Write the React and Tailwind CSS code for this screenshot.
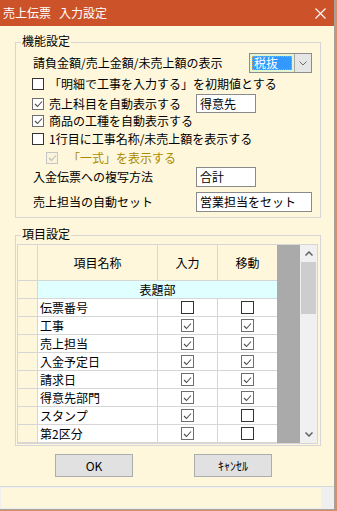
import React from "react";

function Box({ checked, disabled, big }) {
  const size = big ? "w-[13px] h-[13px]" : "w-[12px] h-[12px]";
  const tone = disabled
    ? "border-[#c6c6c6] bg-[#fbf4dc]"
    : checked
    ? "border-[#6e6e6e] bg-white"
    : "border-[#333333] bg-white";
  return (
    <span className={`flex shrink-0 items-center justify-center border ${size} ${tone}`}>
      {checked && (
        <svg width="9" height="8" viewBox="0 0 9 8">
          <polyline
            points="1,4 3.5,6.5 8,1.5"
            fill="none"
            stroke={disabled ? "#b9b9b9" : "#4f4f4f"}
            strokeWidth="1.1"
          />
        </svg>
      )}
    </span>
  );
}

function Group({ label, className, children }) {
  return (
    <div className={`relative ml-[15px] w-[306px] border border-[#d6d6d6] ${className}`}>
      <span className="absolute left-[5px] top-[-9px] bg-[#fff7dc] px-[1px] leading-[14px]">
        {label}
      </span>
      {children}
    </div>
  );
}

const rows = [
  ["伝票番号", false, false],
  ["工事", true, true],
  ["売上担当", true, true],
  ["入金予定日", true, true],
  ["請求日", true, true],
  ["得意先部門", true, true],
  ["スタンプ", true, false],
  ["第2区分", true, false],
];

export default function App() {
  return (
    <div className="h-[511px] w-[337px] overflow-hidden border-b border-r-2 border-[#d98e6b] bg-[#fff7dc] font-['Noto_Sans_CJK_JP',sans-serif] text-[12px] leading-[14px] text-black">
      <div className="flex h-[510px] flex-col border-b border-r border-[#aaa39c]">
        {/* title bar */}
        <div className="flex h-[26px] shrink-0 items-center bg-[#cc5229] pl-[3px] text-white">
          <span>売上伝票</span>
          <span className="ml-[8px]">入力設定</span>
          <svg className="ml-auto mr-[8px]" width="11" height="11" viewBox="0 0 11 11">
            <path d="M0.5 0.5 L10.5 10.5 M10.5 0.5 L0.5 10.5" stroke="white" strokeWidth="1.1" />
          </svg>
        </div>

        {/* 機能設定 */}
        <Group label="機能設定" className="mt-[16px] h-[176px] pt-[10px]">
          <div className="flex h-[20px] items-center pl-[17px]">
            <span>請負金額/売上金額/未売上額の表示</span>
            <div className="ml-auto mr-[8px] flex h-[20px] w-[63px] border border-[#8c8c8c] bg-[#e2f4d0]">
              <div className="m-[2px] flex flex-1 items-center border border-dotted border-[#e0a050] bg-[#3399ff] pl-[1px] text-white">
                税抜
              </div>
              <div className="flex w-[17px] items-center justify-center border-l border-[#a8a8a8] bg-[#e6e6e6]">
                <svg width="8" height="5" viewBox="0 0 8 5">
                  <polyline points="0.5,0.5 4,4 7.5,0.5" fill="none" stroke="#707070" strokeWidth="1" />
                </svg>
              </div>
            </div>
          </div>

          <div className="flex h-[22px] items-center gap-[5px] pl-[16px]">
            <Box />
            <span>「明細で工事を入力する」を初期値とする</span>
          </div>

          <div className="flex h-[17px] items-center pl-[16px]">
            <div className="flex w-[164px] items-center gap-[5px]">
              <Box checked />
              <span>売上科目を自動表示する</span>
            </div>
            <div className="flex h-[19px] w-[60px] shrink-0 items-center border border-[#8a8a8a] bg-white pl-[3px]">
              得意先
            </div>
          </div>

          <div className="flex h-[17px] items-center gap-[5px] pl-[16px]">
            <Box checked />
            <span>商品の工種を自動表示する</span>
          </div>

          <div className="flex h-[19px] items-center gap-[5px] pl-[16px]">
            <Box />
            <span>1行目に工事名称/未売上額を表示する</span>
          </div>

          <div className="flex h-[19px] items-center gap-[10px] pl-[30px]">
            <Box checked disabled />
            <span className="text-[#a88c00]">「一式」を表示する</span>
          </div>

          <div className="flex h-[20px] items-center pl-[17px]">
            <span className="w-[163px]">入金伝票への複写方法</span>
            <div className="flex h-[20px] w-[60px] shrink-0 items-center border border-[#8a8a8a] bg-white pl-[3px]">
              合計
            </div>
          </div>

          <div className="mt-[5px] flex h-[20px] items-center pl-[17px]">
            <span className="w-[163px]">売上担当の自動セット</span>
            <div className="flex h-[20px] w-[116px] shrink-0 items-center border border-[#8a8a8a] bg-white pl-[3px]">
              営業担当をセット
            </div>
          </div>
        </Group>

        {/* 項目設定 */}
        <Group label="項目設定" className="mt-[17px] h-[211px] pl-[1px] pt-[8px]">
          <div className="flex h-[200px] w-[301px] border border-[#d6d6d6]">
            <div className="flex w-[259px] flex-col">
              <div className="flex h-[36px] border-b border-[#d6d6d6]">
                <div className="w-[20px] border-r border-[#d6d6d6]" />
                <div className="flex w-[120px] items-center justify-center border-r border-[#d6d6d6]">
                  項目名称
                </div>
                <div className="flex w-[60px] items-center justify-center border-r border-[#d6d6d6]">
                  入力
                </div>
                <div className="flex w-[59px] items-center justify-center">移動</div>
              </div>

              <div className="flex h-[18px] border-b border-[#d6d6d6]">
                <div className="w-[20px] border-r border-[#d6d6d6]" />
                <div className="flex w-[239px] items-center justify-center bg-[#e0ffff]">表題部</div>
              </div>

              {rows.map(([name, a, b]) => (
                <div key={name} className="flex h-[18px] border-b border-[#d6d6d6]">
                  <div className="w-[20px] border-r border-[#d6d6d6]" />
                  <div className="flex w-[120px] items-center border-r border-[#d6d6d6] bg-white pl-[2px]">
                    {name}
                  </div>
                  <div className="flex w-[60px] items-center justify-center border-r border-[#d6d6d6] bg-white">
                    <Box big checked={a} />
                  </div>
                  <div className="flex w-[59px] items-center justify-center bg-white">
                    <Box big checked={b} />
                  </div>
                </div>
              ))}
            </div>

            <div className="w-[23px] bg-[#aaaaaa]" />

            <div className="flex w-[17px] flex-col bg-[#f0f0f0]">
              <div className="flex h-[17px] items-center justify-center">
                <svg width="8" height="5" viewBox="0 0 8 5">
                  <polyline points="0.5,4.5 4,1 7.5,4.5" fill="none" stroke="#606060" strokeWidth="1.5" />
                </svg>
              </div>
              <div className="mx-[1px] h-[52px] bg-[#cdcdcd]" />
              <div className="flex-1" />
              <div className="flex h-[17px] items-center justify-center">
                <svg width="8" height="5" viewBox="0 0 8 5">
                  <polyline points="0.5,0.5 4,4 7.5,0.5" fill="none" stroke="#606060" strokeWidth="1.5" />
                </svg>
              </div>
            </div>
          </div>
        </Group>

        {/* buttons */}
        <div className="mt-[8px] flex h-[23px] gap-[61px] pl-[55px]">
          <div className="flex w-[78px] items-center justify-center border border-[#adadad] bg-[#e1e1e1]">
            OK
          </div>
          <div className="flex w-[78px] items-center justify-center border border-[#adadad] bg-[#e1e1e1]">
            ｷｬﾝｾﾙ
          </div>
        </div>

        {/* status bar */}
        <div className="mt-[9px] flex h-[23px] border-t border-[#d8d8d8] bg-[#efefef] pt-[1px]">
          <div className="ml-[1px] h-[20px] w-[320px] bg-[#fff7dc]" />
        </div>
      </div>
    </div>
  );
}
